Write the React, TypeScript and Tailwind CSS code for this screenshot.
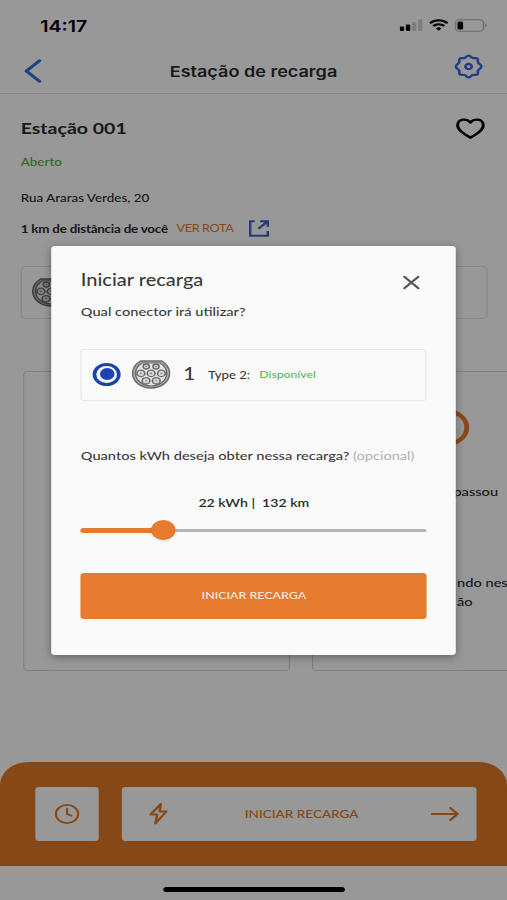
import { Clock, X } from "lucide-react";

const ConnectorIcon = () => (
  <svg width="32" height="29" viewBox="0 0 32 29" fill="none" stroke="#6a6a6a" strokeWidth="1">
    <path d="M7.4 1H24.6A15.3 15.3 0 0 1 31.2 13C31.2 21.5 24.4 28 16 28S.8 21.5.8 13A15.3 15.3 0 0 1 7.4 1Z" fill="#b0b0b0" strokeWidth="1.3" />
    <path d="M8.6 3H23.4A13 13 0 0 1 28.8 13.2C28.8 20.4 23 26 16 26S3.2 20.4 3.2 13.2A13 13 0 0 1 8.6 3Z" fill="#e6e6e6" strokeWidth="1.2" />
    {[
      [12, 6.5, 2.5],
      [20, 6.5, 2.5],
      [7.6, 13.4, 3.2],
      [16, 13.4, 3.2],
      [24.4, 13.4, 3.2],
      [11.8, 20.8, 3.2],
      [20.2, 20.8, 3.2],
    ].map(([cx, cy, r]) => (
      <g key={`${cx}-${cy}`}>
        <circle cx={cx} cy={cy} r={r} fill="#d6d6d6" strokeWidth="1.3" />
        <circle cx={cx} cy={cy} r="0.8" fill="#888" stroke="none" />
      </g>
    ))}
  </svg>
);

const StatusBar = () => (
  <div className="flex h-[50px] items-center justify-between pr-4 pl-[33px]">
    <span className="pt-0.5 font-['Inter'] text-[16px] font-semibold text-black">14:17</span>
    <div className="flex items-center gap-[5px]">
      <svg width="19" height="12" viewBox="0 0 19 12">
        <rect x="0" y="7.5" width="3.6" height="4.5" rx="1" fill="#000" />
        <rect x="5" y="5.5" width="3.6" height="6.5" rx="1" fill="#000" />
        <rect x="10" y="3" width="3.6" height="9" rx="1" fill="#d2d2d2" />
        <rect x="15" y="0.5" width="3.6" height="11.5" rx="1" fill="#d2d2d2" />
      </svg>
      <svg width="16" height="12" viewBox="0 0 16 12" fill="none" stroke="#000" strokeWidth="2">
        <path d="M.8 4.2a10.4 10.4 0 0 1 14.4 0" />
        <path d="M3.4 7a6.6 6.6 0 0 1 9.2 0" />
        <path d="M8 11.8 5.8 9.4a3.2 3.2 0 0 1 4.4 0Z" fill="#000" stroke="none" />
      </svg>
      <svg width="27" height="13" viewBox="0 0 27 13">
        <rect x="0.7" y="0.7" width="23" height="11.6" rx="3.2" fill="none" stroke="#c0c0c0" strokeWidth="1.3" />
        <rect x="2.4" y="2.4" width="4.6" height="8.2" rx="1.5" fill="#000" />
        <path d="M25 4.5c1.8.7 1.8 3.3 0 4Z" fill="#c0c0c0" />
      </svg>
    </div>
  </div>
);

const Header = () => (
  <header className="flex h-[44px] items-center justify-between border-b border-[#e2e2e2] pr-[19px] pl-[19px]">
    <svg className="mb-0.5" width="25" height="24" viewBox="0 0 25 24" fill="none" stroke="#3a6ae0" strokeWidth="2.9" strokeLinecap="round" strokeLinejoin="round">
      <path d="M13.4 1.8 2.6 12l10.8 10.2" />
    </svg>
    <h1 className="pt-px font-['Inter'] text-[14.8px] font-semibold text-[#2b2b2b]">Estação de recarga</h1>
    <svg className="mb-2.5" width="25" height="25" viewBox="0 0 24 24" fill="none" stroke="#3a66dc" strokeWidth="2.1" strokeLinejoin="round">
      <path d="M12 1.5c1.3 0 1.9 1.8 3.1 2.3s2.9-.4 3.8.5c.9.9 0 2.6.5 3.8s2.6 1.8 2.6 3.9-2.1 2.7-2.6 3.9.4 2.9-.5 3.8-2.6 0-3.8.5-1.8 2.3-3.1 2.3-1.9-1.8-3.1-2.3-2.9.4-3.8-.5 0-2.6-.5-3.8S2 14.1 2 12s2.1-2.7 2.6-3.9-.4-2.9.5-3.8 2.6 0 3.8-.5S10.7 1.5 12 1.5Z" />
      <circle cx="12" cy="12" r="2.5" />
    </svg>
  </header>
);

const Station = () => (
  <section className="px-[17px] text-[#2b2b2b]">
    <div className="flex h-[69px] items-center justify-between">
      <h2 className="pb-0.5 text-[16px] font-bold">Estação 001</h2>
      <svg className="mr-px" width="24" height="21" viewBox="0 0 24 21" fill="none" stroke="#000" strokeWidth="2.3" strokeLinejoin="round">
        <path d="M12 19.6C10 18.6 5.200 14.800 3 11.800.2 8 1.200 1.600 6.600 1.600c2.300 0 4.200 1.100 5.400 2.900 1.200-1.800 3.100-2.900 5.400-2.900 5.400 0 6.400 6.400 3.600 10.200-2.200 3-7 6.800-9 7.800Z" />
      </svg>
    </div>
    <p className="-mt-2 text-[11px] leading-[14px] font-medium text-[#4fae3c]">Aberto</p>
    <p className="mt-[22px] text-[11px] leading-[14px] font-medium">Rua Araras Verdes, 20</p>
    <div className="mt-[14px] flex h-[20px] items-center">
      <span className="text-[11px] font-bold tracking-[-0.18px]">1 km de distância de você</span>
      <span className="ml-[7px] text-[10.5px] tracking-[-0.35px] text-[#e67a2e]">VER ROTA</span>
      <svg className="mb-0.5 ml-[12px]" width="18" height="17" viewBox="0 0 18 17" fill="none" stroke="#3e62d2" strokeWidth="2">
        <path d="M5 1.3H1.300v14.400h14.400V11M9.500 1.300h6.200v5.500M15.200 1.800 8 8.800" />
      </svg>
    </div>
    <div className="mt-[27px] -mr-px flex h-[53px] items-center rounded-sm border border-[#e2e2e2] pl-2">
      <ConnectorIcon />
    </div>
  </section>
);

const InfoCards = () => (
  <section className="mt-[52px] flex gap-[18px] pl-[19px] text-[12px] font-medium text-[#2b2b2b]">
    <div className="h-[300px] w-[219px] shrink-0 rounded-sm border border-[#d8d8d8]" />
    <div className="h-[300px] w-[219px] shrink-0 rounded-sm border border-[#d8d8d8]">
      <div className="mt-[37px] ml-[91px] h-[37px] w-[37px] rounded-full border-4 border-[#e67a2e]" />
      <p className="mt-[36px] ml-[115px] leading-5">passou</p>
      <p className="mt-[71px] ml-[118px] leading-[19px] whitespace-nowrap">
        ndo nes
        <br />
        ão
      </p>
    </div>
  </section>
);

const Footer = () => (
  <footer className="mt-auto">
    <div className="flex h-[104px] items-center gap-[19px] rounded-t-[23px] bg-[#e07826] pr-[25px] pl-[29px]">
      <button className="flex h-[54px] w-[52px] items-center justify-center rounded-[3px] bg-[#fdfdfd] text-[#e07826]">
        <Clock size={22} strokeWidth={1.9} />
      </button>
      <button className="flex h-[54px] flex-1 items-center justify-between rounded-[3px] bg-[#fdfdfd] pr-[14px] pl-[22px] text-[#e07826]">
        <svg width="16" height="24" viewBox="0 0 16 24" fill="none" stroke="currentColor" strokeWidth="2" strokeLinejoin="round">
          <path d="M10 2 1.5 12.5H7L5.5 21.5 14.5 9.5H9Z" />
        </svg>
        <span className="ml-1 text-[11.1px] font-medium">INICIAR RECARGA</span>
        <svg width="24" height="16" viewBox="0 0 24 16" fill="none" stroke="currentColor" strokeWidth="2.1" strokeLinecap="round" strokeLinejoin="round">
          <path d="M1.5 8h21M16.5 2 22.5 8l-6 6" />
        </svg>
      </button>
    </div>
    <div className="flex h-[34px] items-end justify-center pb-2">
      <div className="h-[5px] w-[149px] rounded-full bg-black" />
    </div>
  </footer>
);

const Slider = ({ percent }: { percent: number }) => (
  <div className="relative flex h-5 items-center">
    <div className="h-[3px] w-full rounded-full bg-[#b5b5b5]" />
    <div className="absolute left-0 h-[5px] rounded-full bg-[#e67a2e]" style={{ width: `${percent}%` }} />
    <div className="absolute h-5 w-5 -translate-x-1/2 rounded-full bg-[#e67a2e] shadow-sm" style={{ left: `${percent}%` }} />
  </div>
);

const ChargeDialog = () => (
  <div className="absolute top-[246px] left-[42.3px] h-[409px] w-[332px] rounded-[3px] bg-[#fafafa] px-6 font-medium text-[#3a3a3a] shadow-[0_2px_8px_rgba(0,0,0,0.35)]">
    <div className="flex h-[68px] items-center justify-between pr-px">
      <h2 className="text-[16.4px]">Iniciar recarga</h2>
      <X className="mt-1" size={23} strokeWidth={1.9} color="#555" />
    </div>
    <p className="-mt-[9px] text-[12px] leading-[14px]">Qual conector irá utilizar?</p>
    <div className="mt-[30px] flex h-[52px] items-center rounded-[3px] border border-[#e9e9e9] pl-[9px]">
      <div className="mb-0.5 flex h-[23px] w-[23px] items-center justify-center rounded-full border-3 border-[#1c43b4]">
        <div className="h-[12px] w-[12px] rounded-full bg-[#1c43b4]" />
      </div>
      <div className="mb-0.5 ml-[9px]">
        <ConnectorIcon />
      </div>
      <span className="mb-[3px] ml-[10px] text-[17px]">1</span>
      <span className="ml-[10.5px] text-[10.8px]">Type 2:</span>
      <span className="mb-px ml-[7.5px] text-[10px] text-[#55b848]">Disponível</span>
    </div>
    <p className="mt-[48px] text-[12px] leading-[14px] tracking-[-0.01px] whitespace-nowrap">
      Quantos kWh deseja obter nessa recarga? <span className="font-normal text-[#b0b0b0]">(opcional)</span>
    </p>
    <p className="mt-[33px] mb-[10px] text-center text-[11.6px] leading-[14px] font-semibold whitespace-pre text-[#2b2b2b]">22 kWh |  132 km</p>
    <Slider percent={24} />
    <button className="mt-[33px] flex h-[46px] w-full items-center justify-center rounded-[3px] bg-[#e67a2e] text-[10.2px] text-[#fbeee4]">
      INICIAR RECARGA
    </button>
  </div>
);

export default function App() {
  return (
    <div className="h-[900px] w-[507px] overflow-hidden">
      <div className="relative flex h-[900px] w-[416px] origin-top-left scale-x-[1.21875] flex-col overflow-hidden bg-[#fdfdfd] font-['Lato',sans-serif]">
        <StatusBar />
        <Header />
        <Station />
        <InfoCards />
        <Footer />
        <div className="absolute inset-0 bg-black/40" />
        <ChargeDialog />
      </div>
    </div>
  );
}
